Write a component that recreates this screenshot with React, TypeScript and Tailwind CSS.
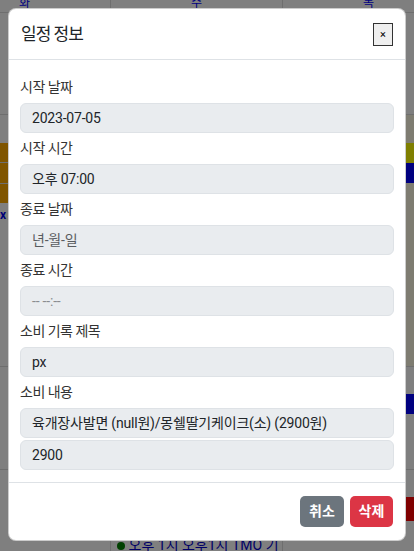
const fields = [
  { label: "시작 날짜", value: "2023-07-05", muted: false },
  { label: "시작 시간", value: "오후 07:00", muted: false },
  { label: "종료 날짜", value: "년-월-일", muted: "mid" },
  { label: "종료 시간", value: "-- --:--", muted: "light" },
  { label: "소비 기록 제목", value: "px", muted: false },
];

const Field = ({ value, muted }: { value: string; muted: false | string }) => {
  const color =
    muted === "mid" ? "text-[#595c5f]" : muted === "light" ? "text-[#8a8d90]" : "text-[#212529]";
  return (
    <div
      className={`h-[30px] flex items-center px-[11px] bg-[#e9ecef] border border-[#dee2e6] rounded-[6px] text-[14px] tracking-[-0.2px] ${color}`}
    >
      {value}
    </div>
  );
};

const Label = ({ children }: { children: string }) => (
  <div className="h-[31px] flex items-center text-[14px] tracking-[-0.5px] text-[#333]">{children}</div>
);

const Calendar = () => {
  return (
    <div className="ml-[-61px] grid grid-cols-[172px_172px_172px] grid-rows-[13px_102px_252px_103px_120px] text-[12px]">
      {/* header */}
      {["화", "수", "목"].map((d) => (
        <div key={d} className="border-r border-b border-[#dddddd] flex justify-center items-end overflow-hidden">
          <span className="text-[#0000ff] underline leading-[10px] translate-y-[-4px]">{d}</span>
        </div>
      ))}

      {/* week 1 */}
      <div className="border-r border-b border-[#dddddd]" />
      <div className="border-r border-b border-[#dddddd]" />
      <div className="border-r border-b border-[#dddddd]" />

      {/* week 2 */}
      <div className="border-r border-b border-[#dddddd] pt-[28px] flex flex-col">
        <div className="h-[20px] bg-[#ffaa00] border-b border-[#dddddd]" />
        <div className="h-[21px] bg-[#ffaa00] border-b border-[#dddddd]" />
        <div className="h-[19px] bg-[#ffaa00]" />
        <div className="text-right pr-[104px] text-[#0000ee] font-bold leading-[24px]">px</div>
      </div>
      <div className="border-r border-b border-[#dddddd]" />
      <div className="border-r border-b border-[#dddddd] bg-[#fcf8e3] pt-[28px] flex flex-col">
        <div className="h-[20px] bg-[#ffff00]" />
        <div className="h-[20px] bg-[#0000ff]" />
      </div>

      {/* week 3 */}
      <div className="border-r border-b border-[#dddddd]" />
      <div className="border-r border-b border-[#dddddd]" />
      <div className="border-r border-b border-[#dddddd] pt-[27px]">
        <div className="h-[20px] bg-[#0000ff]" />
      </div>

      {/* week 4 */}
      <div className="border-r border-[#dddddd]" />
      <div className="border-r border-[#dddddd] pt-[66px] pl-[6px] flex items-start gap-[4px]">
        <span className="mt-[6px] w-[8px] h-[8px] rounded-full bg-[#008000]" />
        <span className="text-[#0000cc] text-[14px] leading-[18px] underline">오후 1시 오후1시 TMO 기차</span>
      </div>
      <div className="border-r border-[#dddddd] pt-[27px]">
        <div className="h-[24px] bg-[#ff0000]" />
      </div>
    </div>
  );
};

export default function App() {
  return (
    <div className="relative w-[414px] h-[551px] overflow-hidden bg-white font-['Roboto','Noto_Sans_CJK_KR',sans-serif]">
      <Calendar />

      {/* backdrop */}
      <div className="absolute inset-0 bg-black/50" />

      {/* modal */}
      <div className="absolute left-[8px] top-[8px] w-[398px] bg-white border border-black/20 rounded-[8px] flex flex-col">
        <div className="h-[51px] flex items-center justify-between pl-[12px] pr-[12px] border-b border-[#dee2e6]">
          <h5 className="text-[17px] tracking-[-1px] text-[#212529] leading-none">일정 정보</h5>
          <button className="w-[20px] h-[23px] bg-[#efefef] border border-[#333] text-[11px] leading-none text-black flex items-center justify-center">
            ×
          </button>
        </div>

        <div className="px-[11px] pt-[12px] pb-[12px] flex flex-col">
          {fields.map((f) => (
            <div key={f.label} className="flex flex-col">
              <Label>{f.label}</Label>
              <Field value={f.value} muted={f.muted} />
            </div>
          ))}
          <Label>소비 내용</Label>
          <div className="flex flex-col gap-[2px]">
            <Field value="육개장사발면 (null원)/몽쉘딸기케이크(소) (2900원)" muted={false} />
            <Field value="2900" muted={false} />
          </div>
        </div>

        <div className="border-t border-[#dee2e6] px-[12px] py-[13px] flex justify-end gap-[6px]">
          <button className="w-[44px] h-[31px] rounded-[5px] bg-[#6c757d] text-white text-[14px] font-bold">취소</button>
          <button className="w-[43px] h-[31px] rounded-[5px] bg-[#dc3545] text-white text-[14px] font-bold">삭제</button>
        </div>
      </div>
    </div>
  );
}
